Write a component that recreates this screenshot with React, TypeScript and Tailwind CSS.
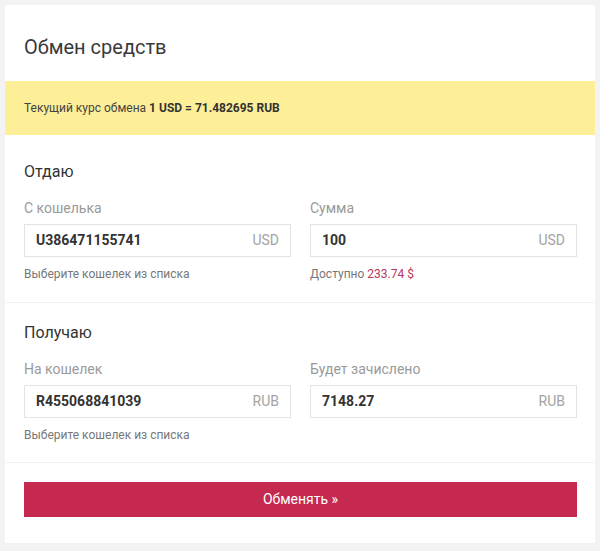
import React from 'react';

const font = { fontFamily: 'Roboto, "Open Sans", sans-serif' };

function Field({
  label,
  value,
  unit,
}: {
  label: string;
  value: string;
  unit: string;
}) {
  return (
    <div className="flex flex-col">
      <div className="text-[14px] leading-[20px] text-[#9a9a9a]">{label}</div>
      <div className="mt-[6px] flex h-[33px] items-center justify-between border border-[#e3e3e3] bg-white px-[11px]">
        <span className="text-[14px] font-bold text-[#333]">{value}</span>
        <span className="text-[14px] text-[#a3a3a3]">{unit}</span>
      </div>
    </div>
  );
}

export default function App() {
  return (
    <div className="h-[551px] w-[600px] bg-[#f4f3f3] px-[5px] pt-[5px]" style={font}>
      <div className="w-[590px] bg-white">
        <div className="h-[76px] pr-[18px] pl-[19px] pt-[28px]">
          <h1 className="text-[20px] leading-[28px] font-normal text-[#3a3a3a]">Обмен средств</h1>
        </div>

        <div className="flex h-[54px] items-center bg-[#fdef98] pr-[18px] pl-[19px] text-[12px] text-[#444]">
          Текущий курс обмена&nbsp;<b className="font-bold text-[#333]">1 USD = 71.482695 RUB</b>
        </div>

        <div className="border-b border-[#f2f2f2] pr-[18px] pl-[19px] pt-[25px] pb-[20px]">
          <div className="text-[16px] leading-[24px] text-[#333]">Отдаю</div>
          <div className="mt-[14px] grid grid-cols-2 gap-[19px]">
            <div>
              <Field label="С кошелька" value="U386471155741" unit="USD" />
              <div className="mt-[9px] text-[12px] leading-[16px] text-[#777]">
                Выберите кошелек из списка
              </div>
            </div>
            <div>
              <Field label="Сумма" value="100" unit="USD" />
              <div className="mt-[9px] text-[12px] leading-[16px] text-[#777]">
                Доступно <span className="text-[#b5375b]">233.74 $</span>
              </div>
            </div>
          </div>
        </div>

        <div className="border-b border-[#f2f2f2] pr-[18px] pl-[19px] pt-[18px] pb-[19px]">
          <div className="text-[16px] leading-[24px] text-[#333]">Получаю</div>
          <div className="mt-[14px] grid grid-cols-2 gap-[19px]">
            <div>
              <Field label="На кошелек" value="R455068841039" unit="RUB" />
              <div className="mt-[9px] text-[12px] leading-[16px] text-[#777]">
                Выберите кошелек из списка
              </div>
            </div>
            <div>
              <Field label="Будет зачислено" value="7148.27" unit="RUB" />
            </div>
          </div>
        </div>

        <div className="pr-[18px] pl-[19px] pt-[19px] pb-[26px]">
          <button className="flex h-[35px] w-full items-center justify-center bg-[#c5294f] text-[14px] text-white">
            Обменять »
          </button>
        </div>
      </div>
    </div>
  );
}
